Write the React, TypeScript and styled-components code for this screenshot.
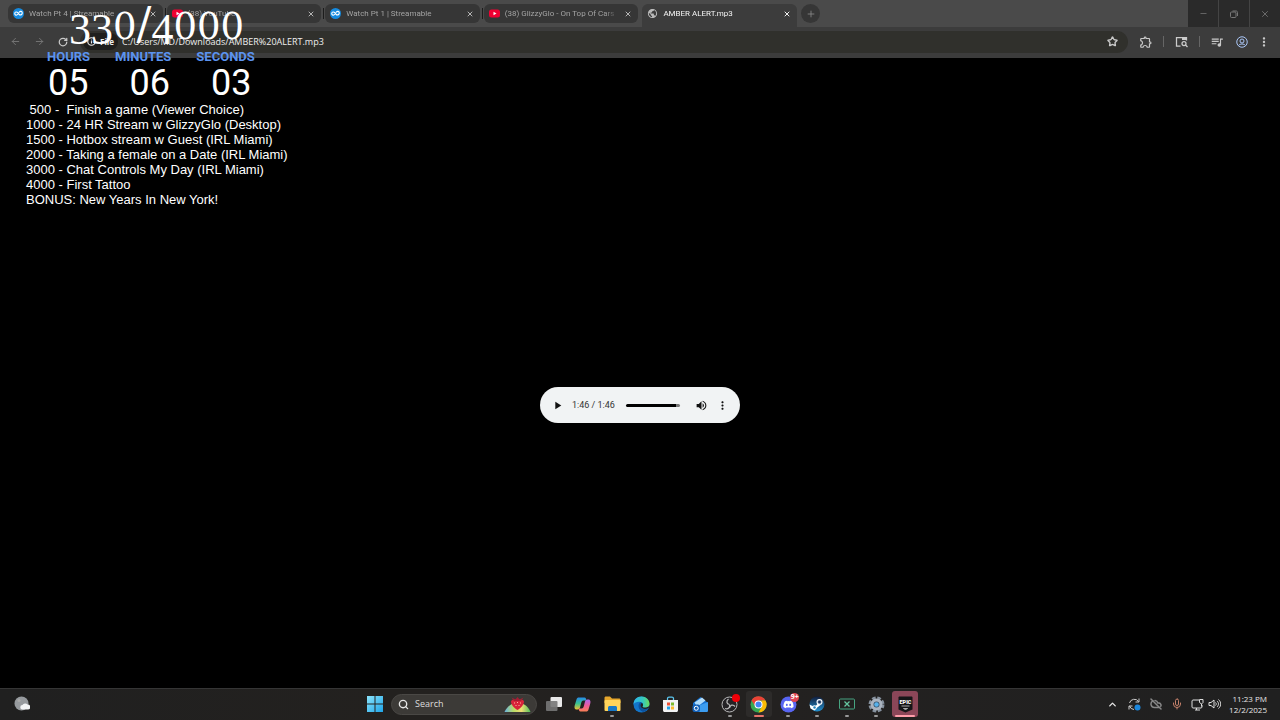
import React from "react";
import styled, { createGlobalStyle } from "styled-components";
import { ArrowLeft, ArrowRight, ChevronUp, CloudOff, Info, Minus, Mic, Plus, RotateCw, Search, Star, X } from "lucide-react";
import { MdMoreVert, MdPlayArrow, MdVolumeUp, MdOutlineExtension, MdQueueMusic, MdPublic } from "react-icons/md";
import { FaDiscord } from "react-icons/fa";

const Global = createGlobalStyle`
  * { box-sizing: border-box; }
  body { margin: 0; background: #000; font-family: "Open Sans", "Noto Sans", sans-serif; }
  button { font: inherit; color: inherit; background: none; border: 0; padding: 0; }
  svg { display: block; flex: none; }
`;

const Desktop = styled.div`
  position: relative;
  display: flex;
  flex-direction: column;
  min-height: 100vh;
  background: #000;
`;

const IconButton = styled.button<{ $w?: number }>`
  display: flex;
  align-items: center;
  justify-content: center;
  flex: none;
  width: ${(p) => p.$w ?? 24}px;
  height: 24px;
`;

/* Browser chrome */
const TabStrip = styled.header`
  display: flex;
  height: 27px;
  padding-left: 8px;
  background: #4a4a4a;
`;

const Tabs = styled.nav`
  display: flex;
  gap: 4px;
  flex: 0 1 789px;
  padding-top: 4px;
`;

const Tab = styled.div<{ $active?: boolean }>`
  position: relative;
  display: flex;
  align-items: center;
  flex: 1 1 0;
  min-width: 0;
  height: ${(p) => (p.$active ? 23 : 19)}px;
  padding: ${(p) => (p.$active ? "0 5px 4px" : "0 5px")};
  gap: 5px;
  border-radius: ${(p) => (p.$active ? "6px 6px 0 0" : "6px")};
  background: ${(p) => (p.$active ? "#3c3c3c" : "#363636")};
  color: ${(p) => (p.$active ? "#f4f4f4" : "#a3a3a3")};
  &:not(:nth-last-child(-n + 2))::after {
    content: "";
    position: absolute;
    right: -3px;
    top: 4px;
    width: 1px;
    height: 11px;
    background: #1c1c1c;
  }
`;

const TabTitle = styled.button`
  flex: 1;
  min-width: 0;
  overflow: hidden;
  text-align: left;
  white-space: nowrap;
  font-family: Roboto, sans-serif;
  font-size: 8px;
  line-height: 12px;
  mask-image: linear-gradient(90deg, #000 88%, transparent);
`;

const CloseTab = styled.button<{ $active?: boolean }>`
  display: flex;
  padding: 0 1px;
  color: ${(p) => (p.$active ? "#f0f0f0" : "#b4b4b4")};
`;

const NewTab = styled.button`
  display: flex;
  align-items: center;
  justify-content: center;
  flex: none;
  width: 19px;
  height: 19px;
  margin: 4px 0 0 4px;
  border-radius: 50%;
  background: #363636;
  color: #8a8a8a;
`;

const WindowButtons = styled.div`
  display: flex;
  gap: 1px;
  margin-left: auto;
  background: #444;
`;

const WindowButton = styled.button`
  display: flex;
  align-items: center;
  justify-content: center;
  width: 30px;
  background: #2a2a2a;
  color: #777;
`;

const Toolbar = styled.div`
  display: flex;
  align-items: center;
  height: 31px;
  padding: 0 3px 2px;
  background: #3c3c3c;
  color: #c9c9c9;
`;

const AddressBar = styled.form`
  display: flex;
  align-items: center;
  flex: 1;
  height: 22px;
  margin-left: 5px;
  padding: 0 4px 0 3px;
  border-radius: 11px;
  background: #30302c;
`;

const FileChip = styled.button`
  display: flex;
  align-items: center;
  gap: 4px;
  height: 17px;
  padding: 0 4px;
  border-radius: 8px;
  background: #1f1f1d;
  color: #eee;
  font-size: 8px;
  font-weight: 700;
`;

const Address = styled.input`
  flex: 1;
  min-width: 0;
  margin-left: 4px;
  padding: 0;
  border: 0;
  background: none;
  color: #eee;
  font: 9px/14px "Open Sans", "Noto Sans", sans-serif;
`;

const Divider = styled.span`
  width: 1px;
  height: 11px;
  background: #666;
`;

/* Stream overlay */
const Overlay = styled.aside`
  position: absolute;
  top: 0;
  left: 26px;
  color: #fff;
`;

const Goal = styled.div`
  height: 49px;
  padding-left: 43px;
  font: 44px/47px "Liberation Serif", serif;
  white-space: nowrap;
`;

const LowFigure = styled.span`
  vertical-align: -5px;
`;

const SmallFigure = styled.span`
  font-family: "DejaVu Serif", serif;
  font-size: 37px;
  line-height: 37px;
`;

const Slash = styled.span`
  font-family: "DejaVu Serif", serif;
`;

const TimerLabels = styled.div`
  display: flex;
  gap: 25px;
  padding-left: 21px;
  font: 700 13px/15px Roboto, sans-serif;
  color: #5b93ef;
`;

const TimerValues = styled.div`
  display: flex;
  gap: 41px;
  padding-left: 22px;
  font: 36px/38px Roboto, sans-serif;
`;

const Goals = styled.div`
  font: 13px/15px "Liberation Sans", sans-serif;
  white-space: pre;
`;

/* Media document */
const Page = styled.main`
  display: flex;
  align-items: center;
  justify-content: center;
  flex: 1;
  padding-top: 64px;
`;

const Player = styled.section`
  display: flex;
  align-items: center;
  width: 200px;
  height: 36px;
  padding: 0 7px;
  border-radius: 18px;
  background: #f1f3f4;
  color: #111;
`;

const Time = styled.time`
  margin: 0 11px 0 4px;
  font: 9px/12px Roboto, sans-serif;
  color: #333;
  white-space: nowrap;
`;

const Seek = styled.input`
  appearance: none;
  flex: 1;
  min-width: 0;
  height: 3px;
  margin: 0 10px 0 0;
  border-radius: 2px;
  background: linear-gradient(90deg, #000 92%, #777 92%);
  &::-webkit-slider-thumb { appearance: none; width: 1px; height: 1px; }
`;

/* Taskbar */
const Taskbar = styled.footer`
  display: grid;
  grid-template-columns: 1fr auto 1fr;
  align-items: center;
  height: 32px;
  padding: 0 13px 1px 14px;
  border-top: 1px solid #353535;
  background: linear-gradient(90deg, #202020, #23211f 30%, #232120 60%, #202020);
  color: #e6e6e6;
`;

const Launcher = styled.div`
  display: flex;
  align-items: center;
  padding-left: 2px;
`;

const SearchBox = styled.label`
  display: flex;
  align-items: center;
  width: 146px;
  height: 21px;
  margin: 0 2px 0 4px;
  padding: 0 5px 0 6px;
  gap: 6px;
  border: 1px solid #4a4845;
  border-radius: 11px;
  background: #3c3a37;
`;

const SearchInput = styled.input`
  flex: 1;
  min-width: 0;
  padding: 0;
  border: 0;
  background: none;
  color: #ddd;
  font: 9px/14px "Open Sans", "Noto Sans", sans-serif;
  &::placeholder { color: #ddd; }
`;

const Apps = styled.div`
  display: flex;
  width: 381px;
`;

const AppSlot = styled.div`
  display: flex;
  justify-content: center;
  flex: 1;
`;

const AppButton = styled.button<{ $mark?: string; $bg?: string }>`
  position: relative;
  display: flex;
  align-items: center;
  justify-content: center;
  width: 26px;
  height: 26px;
  border-radius: 3px;
  background: ${(p) => p.$bg ?? "none"};
  &::after {
    content: "";
    position: absolute;
    bottom: 0;
    width: ${(p) => (p.$mark === "dot" ? 4 : p.$mark === "pink" ? 20 : 10)}px;
    height: 2px;
    border-radius: 1px;
    background: ${(p) => (!p.$mark ? "none" : p.$mark === "dot" ? "#999" : p.$mark === "pink" ? "#ff9daa" : "#e8756a")};
  }
`;

const Badge = styled.span<{ $dot?: boolean }>`
  position: absolute;
  top: ${(p) => (p.$dot ? 3 : 2)}px;
  right: ${(p) => (p.$dot ? 3 : 2)}px;
  width: ${(p) => (p.$dot ? 8 : 9)}px;
  height: ${(p) => (p.$dot ? 8 : 9)}px;
  border-radius: 50%;
  background: ${(p) => (p.$dot ? "#f00008" : "#e04452")};
  color: #fff;
  font-size: 7px;
  line-height: 8px;
  font-weight: 700;
`;

const Tray = styled.div`
  display: flex;
  align-items: center;
  justify-content: flex-end;
`;

const Clock = styled.time`
  margin-left: 8px;
  text-align: right;
  font-size: 8px;
  line-height: 11px;
`;

const StreamableIcon = () => (
  <svg width="11" height="11" viewBox="0 0 22 22">
    <circle cx="11" cy="11" r="11" fill="#168be0" />
    <path d="M12.5 8.5c2-3 6-2 6 1.5 0 4-4 5-6.5 2.5l-2-3C7.500 7 3.500 7.500 3.500 11s4 4.500 6 1.500" fill="none" stroke="#fff" strokeWidth="2.300" strokeLinecap="round" />
  </svg>
);

const YouTubeIcon = () => (
  <svg width="11" height="11" viewBox="0 0 22 22">
    <rect y="3" width="22" height="16" rx="5" fill="#f00032" />
    <path d="M9 7.500v7l6-3.500z" fill="#fff" />
  </svg>
);

const WindowsIcon = () => (
  <svg width="16" height="16" viewBox="0 0 32 32">
    <defs>
      <linearGradient id="win" x1="0" y1="0" x2="1" y2="1">
        <stop offset="0" stopColor="#8be4fb" />
        <stop offset="1" stopColor="#1fa5e9" />
      </linearGradient>
    </defs>
    <path d="M0 0h15v15H0zM17 0h15v15H17zM0 17h15v15H0zM17 17h15v15H17z" fill="url(#win)" />
  </svg>
);

const StrawberryHill = () => (
  <svg width="27" height="17" viewBox="0 0 54 34">
    <defs>
      <linearGradient id="hill">
        <stop offset="0" stopColor="#68b3e3" />
        <stop offset=".35" stopColor="#b9dc66" />
        <stop offset=".65" stopColor="#f1dd74" />
        <stop offset="1" stopColor="#4fc25c" />
      </linearGradient>
    </defs>
    <path d="M1 32C5 22 14 15 22 15h12c9 1 15 8 19 17z" fill="url(#hill)" />
    <path d="M27 28c-7-4-13-11-13-17 2-5 9-5 13-1 4-4 11-4 13 1 0 6-6 13-13 17z" fill="#d8233a" />
    <path d="M15 3l8 4 4-5 4 5 8-4-5 7H20z" fill="#a51e33" />
    <path d="M20 14h2M26 13h2M32 14h2M23 19h2M29 19h2" stroke="#ffb0a0" strokeWidth="2" />
  </svg>
);

const TaskViewIcon = () => (
  <svg width="18" height="16" viewBox="0 0 36 32">
    <rect x="11" y="2" width="23" height="20" rx="2" fill="#e9e9e9" />
    <rect x="2" y="10" width="23" height="20" rx="2" fill="#777" opacity=".9" />
  </svg>
);

const CopilotIcon = () => (
  <svg width="17" height="17" viewBox="0 0 34 34">
    <defs>
      <linearGradient id="cpA" x1="0" y1="0" x2="0" y2="1">
        <stop offset="0" stopColor="#268bea" />
        <stop offset=".5" stopColor="#39c48f" />
        <stop offset="1" stopColor="#f2c230" />
      </linearGradient>
      <linearGradient id="cpB" x1="0" y1="0" x2="0" y2="1">
        <stop offset="0" stopColor="#aa67ee" />
        <stop offset=".5" stopColor="#ed5b9b" />
        <stop offset="1" stopColor="#fa8054" />
      </linearGradient>
    </defs>
    <path d="M10 3h11c3 0 3 3 4 6h-6c-3 0-4 2-5 6l-2 8c-1 3-3 4-6 4-5 0-6-4-4-10l3-10c1-3 2-4 5-4z" fill="url(#cpA)" />
    <path d="M24 31H13c-3 0-3-3-4-6h6c3 0 4-2 5-6l2-8c1-3 3-4 6-4 5 0 6 4 4 10l-3 10c-1 3-2 4-5 4z" fill="url(#cpB)" />
  </svg>
);

const FolderIcon = () => (
  <svg width="17" height="16" viewBox="0 0 34 32">
    <path d="M1 4c0-2 1-3 3-3h8l4 4h14c2 0 3 1 3 3v6H1z" fill="#e6a72c" />
    <rect x="1" y="8" width="32" height="22" rx="2" fill="#ffd45b" />
    <path d="M8 30v-6c0-3 1-4 4-4h10c3 0 4 1 4 4v6z" fill="#1779c8" />
  </svg>
);

const EdgeIcon = () => (
  <svg width="17" height="17" viewBox="0 0 34 34">
    <defs>
      <linearGradient id="edge">
        <stop offset="0" stopColor="#2cb4ed" />
        <stop offset=".6" stopColor="#36c9bd" />
        <stop offset="1" stopColor="#6adb58" />
      </linearGradient>
    </defs>
    <circle cx="17" cy="17" r="16" fill="#1375c9" />
    <path d="M1 17C1 7 8 1 17 1s16 7 16 14c0 6-4 9-9 9-4 0-6-1-5-3 2-2 2-8-4-9-6-1-12 1-14 5z" fill="url(#edge)" />
    <path d="M14 13c-5 4-4 15 6 19 5-1 9-4 11-8-6 4-15 2-15-4 0-3 2-3 2-5-1-2-2-3-4-2z" fill="#0c529e" />
    <path d="M19 21c2-2 1-6-1-7-3 1-4 7 0 10 4 3 9 2 13 0 2-2 2-4 2-5-3 5-14 5-14 2z" fill="#232120" />
  </svg>
);

const StoreIcon = () => (
  <svg width="17" height="17" viewBox="0 0 34 34">
    <path d="M11 8V5c0-2 1-3 3-3h6c2 0 3 1 3 3v3" fill="none" stroke="#5cc5ed" strokeWidth="2.500" />
    <path d="M2 8h30v20c0 3-1 4-4 4H6c-3 0-4-1-4-4z" fill="#f3f3f3" />
    <path d="M10 13h6v6h-6z" fill="#ee5135" />
    <path d="M18 13h6v6h-6z" fill="#7ebb2d" />
    <path d="M10 21h6v6h-6z" fill="#24a4e8" />
    <path d="M18 21h6v6h-6z" fill="#fdb92e" />
  </svg>
);

const MailIcon = () => (
  <svg width="17" height="17" viewBox="0 0 34 34">
    <path d="M2 14L17 2l15 12v14c0 3-1 4-4 4H8c-4 0-6-2-6-6z" fill="#1673d3" />
    <path d="M5 13L20 3l7 6-17 13z" fill="#b0dcfb" />
    <path d="M9 21l23-9v16c0 3-1 4-4 4H9z" fill="#3c9df0" />
    <rect x="1" y="17" width="15" height="15" rx="4" fill="#1260b8" />
    <circle cx="8.500" cy="24.500" r="4" fill="none" stroke="#fff" strokeWidth="2" />
  </svg>
);

const ObsIcon = () => (
  <svg width="17" height="17" viewBox="0 0 34 34">
    <circle cx="17" cy="17" r="15" fill="#242225" stroke="#b9b9b9" strokeWidth="2" />
    <g fill="none" stroke="#b9b9b9" strokeWidth="2.500">
      <path d="M15 6c-5 4-4 10 2 11" />
      <path d="M28 21c-4-5-10-3-11 3" />
      <path d="M8 25c6 2 11-2 9-8" />
    </g>
  </svg>
);

const ChromeIcon = () => (
  <svg width="17" height="17" viewBox="0 0 34 34">
    <circle cx="17" cy="17" r="16" fill="#35a853" />
    <path d="M3 9a16 16 0 0 1 28 0H17L11 21z" fill="#e94235" />
    <path d="M31 9a16 16 0 0 1-14 24l7-12-1-12z" fill="#fbbc05" />
    <circle cx="17" cy="17" r="8" fill="#fff" />
    <circle cx="17" cy="17" r="6" fill="#4285f4" />
  </svg>
);

const DiscordIcon = () => (
  <svg width="17" height="17" viewBox="0 0 34 34">
    <circle cx="17" cy="17" r="16" fill="#5865f2" />
    <FaDiscord x="6" y="6" size={22} color="#fff" />
  </svg>
);

const SteamIcon = () => (
  <svg width="16" height="16" viewBox="0 0 32 32">
    <defs>
      <linearGradient id="steam" x1="0" y1="0" x2="0" y2="1">
        <stop offset="0" stopColor="#111d3c" />
        <stop offset="1" stopColor="#2390ce" />
      </linearGradient>
    </defs>
    <circle cx="16" cy="16" r="15" fill="url(#steam)" />
    <path d="M1 17l10 5 7-7 5 3-9 7-3 4-8-4z" fill="#fff" />
    <circle cx="21" cy="12" r="6" fill="#fff" />
    <circle cx="21" cy="12" r="3.500" fill="#17315b" stroke="#8eabc6" />
    <circle cx="11" cy="23" r="4.500" fill="#fff" />
    <circle cx="11" cy="23" r="2.500" fill="#2384be" />
  </svg>
);

const ScreenXIcon = () => (
  <svg width="16" height="12" viewBox="0 0 32 24" fill="none" stroke="#47a481" strokeWidth="2">
    <rect x="1" y="2" width="30" height="20" rx="2" />
    <path d="M11 7l10 10M21 7L11 17" stroke="#66c6a0" strokeWidth="2.500" />
  </svg>
);

const SettingsIcon = () => (
  <svg width="17" height="17" viewBox="0 0 34 34">
    <circle cx="17" cy="17" r="13" fill="none" stroke="#86919e" strokeWidth="6" strokeDasharray="7 3.210" />
    <circle cx="17" cy="17" r="9" fill="#36536e" stroke="#aab3bf" strokeWidth="6" />
    <circle cx="17" cy="17" r="4.500" fill="#58b2eb" />
  </svg>
);

const EpicIcon = () => (
  <svg width="15" height="17" viewBox="0 0 30 34">
    <path d="M3 1h24c1 0 2 1 2 2v24l-14 6-14-6V3c0-1 1-2 2-2z" fill="#151517" />
    <text x="15" y="16" textAnchor="middle" fill="#fff" fontFamily="Roboto, sans-serif" fontWeight="900" fontSize="11">EPIC</text>
    <path d="M7 20h16M11 25h8l-4 2z" stroke="#aaa" strokeWidth="2" fill="#aaa" />
  </svg>
);

const WeatherIcon = () => (
  <svg width="16" height="16" viewBox="0 0 32 32">
    <circle cx="15" cy="15" r="14" fill="#969a9e" />
    <circle cx="10" cy="9" r="3" fill="#aaa" />
    <path d="M17 27a4.500 4.500 0 0 1 0-9 6 6 0 0 1 10-1 5 5 0 0 1 1 10z" fill="#f2f4f6" />
  </svg>
);

const SyncIcon = () => (
  <svg width="13" height="13" viewBox="0 0 26 26" fill="none" stroke="#ccc" strokeWidth="2">
    <path d="M3 10a10 10 0 0 1 18-3M22 1v7h-7M3 16a10 10 0 0 0 9 7M2 23v-7h7" />
    <circle cx="19" cy="19" r="6" fill="#1b87dd" stroke="none" />
  </svg>
);

const NetworkIcon = () => (
  <svg width="13" height="13" viewBox="0 0 26 26" fill="none" stroke="#ddd" strokeWidth="2">
    <path d="M16 4H4c-1 0-2 1-2 2v12c0 1 1 2 2 2h16c1 0 2-1 2-2v-4M8 24h10M11 20v4" />
    <path d="M17 3h7v6l-3 3-4-3zM21 12v5" />
  </svg>
);

const SpeakerIcon = () => (
  <svg width="13" height="12" viewBox="0 0 26 24" fill="none" stroke="#ddd" strokeWidth="2">
    <path d="M2 9h4l6-5v16l-6-5H2zM15 9c2 2 2 4 0 6M18 6c4 4 4 8 0 12M21 3c6 6 6 12 0 18" />
  </svg>
);

const TabSearchIcon = () => (
  <svg width="13" height="12" viewBox="0 0 26 24" fill="none" stroke="#ccc" strokeWidth="2.500">
    <path d="M11 20H3V3h20v6" />
    <path d="M14 3h9v5h-9z" fill="#ccc" stroke="none" />
    <circle cx="18" cy="15" r="4" />
    <path d="M21 18l4 4" />
  </svg>
);

const ProfileIcon = () => (
  <svg width="12" height="12" viewBox="0 0 24 24" fill="none" stroke="#a9c5f5" strokeWidth="2">
    <circle cx="12" cy="12" r="10.500" />
    <circle cx="12" cy="10" r="4" />
    <path d="M5 19c3-4 11-4 14 0" />
  </svg>
);

const RestoreIcon = () => (
  <svg width="8" height="8" viewBox="0 0 16 16" fill="none" stroke="currentColor" strokeWidth="2">
    <rect x="1" y="4" width="11" height="11" rx="2" />
    <path d="M5 2h7c2 0 3 1 3 3v7" />
  </svg>
);

const tabs = [
  { title: "Watch Pt 4 | Streamable", icon: <StreamableIcon /> },
  { title: "(38) YouTube", icon: <YouTubeIcon /> },
  { title: "Watch Pt 1 | Streamable", icon: <StreamableIcon /> },
  { title: "(38) GlizzyGlo - On Top Of Cars", icon: <YouTubeIcon /> },
  { title: "AMBER ALERT.mp3", icon: <MdPublic size={11} color="#bbb" />, active: true },
];

const apps: { name: string; icon: React.ReactNode; mark?: string; bg?: string; badge?: React.ReactNode }[] = [
  { name: "Task view", icon: <TaskViewIcon /> },
  { name: "Copilot", icon: <CopilotIcon /> },
  { name: "File Explorer", icon: <FolderIcon />, mark: "dot" },
  { name: "Edge", icon: <EdgeIcon /> },
  { name: "Store", icon: <StoreIcon /> },
  { name: "Mail", icon: <MailIcon /> },
  { name: "OBS", icon: <ObsIcon />, mark: "dot", badge: <Badge $dot /> },
  { name: "Chrome", icon: <ChromeIcon />, mark: "line", bg: "#2d2b2a" },
  { name: "Discord", icon: <DiscordIcon />, mark: "dot", badge: <Badge>9+</Badge> },
  { name: "Steam", icon: <SteamIcon />, mark: "dot" },
  { name: "Screen", icon: <ScreenXIcon />, mark: "dot" },
  { name: "Settings", icon: <SettingsIcon />, mark: "dot" },
  { name: "Epic Games", icon: <EpicIcon />, mark: "pink", bg: "#8b4658" },
];

const timer = [
  ["HOURS", "05"],
  ["MINUTES", "06"],
  ["SECONDS", "03"],
];

const goals = [
  " 500 -  Finish a game (Viewer Choice)",
  "1000 - 24 HR Stream w GlizzyGlo (Desktop)",
  "1500 - Hotbox stream w Guest (IRL Miami)",
  "2000 - Taking a female on a Date (IRL Miami)",
  "3000 - Chat Controls My Day (IRL Miami)",
  "4000 - First Tattoo",
  "BONUS: New Years In New York!",
];

export default function App() {
  return (
    <Desktop>
      <Global />
      <TabStrip>
        <Tabs>
          {tabs.map((t, i) => (
            <Tab key={i} $active={t.active}>
              {t.icon}
              <TabTitle>{t.title}</TabTitle>
              <CloseTab aria-label="Close tab" $active={t.active}><X size={8} strokeWidth={3} /></CloseTab>
            </Tab>
          ))}
        </Tabs>
        <NewTab aria-label="New tab"><Plus size={10} /></NewTab>
        <WindowButtons>
          <WindowButton aria-label="Minimize"><Minus size={9} /></WindowButton>
          <WindowButton aria-label="Restore"><RestoreIcon /></WindowButton>
          <WindowButton aria-label="Close"><X size={10} /></WindowButton>
        </WindowButtons>
      </TabStrip>

      <Toolbar>
        <IconButton aria-label="Back"><ArrowLeft size={11} color="#777" /></IconButton>
        <IconButton aria-label="Forward"><ArrowRight size={11} color="#777" /></IconButton>
        <IconButton aria-label="Reload"><RotateCw size={10} strokeWidth={3} /></IconButton>
        <AddressBar>
          <FileChip type="button"><Info size={9} strokeWidth={3} />File</FileChip>
          <Address aria-label="Address" defaultValue="C:/Users/MD/Downloads/AMBER%20ALERT.mp3" />
          <IconButton type="button" aria-label="Bookmark"><Star size={11} strokeWidth={3} /></IconButton>
        </AddressBar>
        <IconButton $w={35} aria-label="Extensions"><MdOutlineExtension size={14} /></IconButton>
        <Divider />
        <IconButton $w={35} aria-label="Search tabs"><TabSearchIcon /></IconButton>
        <Divider />
        <IconButton $w={33} aria-label="Media"><MdQueueMusic size={14} /></IconButton>
        <IconButton $w={17} aria-label="Profile"><ProfileIcon /></IconButton>
        <IconButton $w={27} aria-label="Menu"><MdMoreVert size={14} /></IconButton>
      </Toolbar>

      <Page>
        <Player aria-label="Audio player">
          <IconButton $w={21} aria-label="Play"><MdPlayArrow size={13} /></IconButton>
          <Time>1:46 / 1:46</Time>
          <Seek type="range" aria-label="Seek" min={0} max={106} defaultValue={106} />
          <IconButton $w={22} aria-label="Mute"><MdVolumeUp size={13} /></IconButton>
          <IconButton $w={21} aria-label="More options"><MdMoreVert size={13} /></IconButton>
        </Player>
      </Page>

      <Taskbar>
        <WeatherIcon />
        <Launcher>
          <IconButton aria-label="Start"><WindowsIcon /></IconButton>
          <SearchBox>
            <Search size={11} strokeWidth={3} />
            <SearchInput aria-label="Search" placeholder="Search" />
            <StrawberryHill />
          </SearchBox>
          <Apps>
            {apps.map((a) => (
              <AppSlot key={a.name}>
                <AppButton aria-label={a.name} $mark={a.mark} $bg={a.bg}>
                  {a.icon}
                  {a.badge}
                </AppButton>
              </AppSlot>
            ))}
          </Apps>
        </Launcher>
        <Tray>
          <IconButton $w={21} aria-label="Hidden icons"><ChevronUp size={11} strokeWidth={3} /></IconButton>
          <IconButton $w={22} aria-label="Sync"><SyncIcon /></IconButton>
          <IconButton $w={21} aria-label="Cloud"><CloudOff size={12} strokeWidth={3} color="#888" /></IconButton>
          <IconButton $w={22} aria-label="Microphone"><Mic size={12} color="#c4806a" /></IconButton>
          <IconButton $w={19} aria-label="Network"><NetworkIcon /></IconButton>
          <IconButton $w={14} aria-label="Volume"><SpeakerIcon /></IconButton>
          <Clock>11:23 PM<br />12/2/2025</Clock>
        </Tray>
      </Taskbar>

      <Overlay>
        <Goal>
          <LowFigure>33</LowFigure>
          <SmallFigure>0</SmallFigure>
          <Slash>/</Slash>
          <LowFigure>4</LowFigure>
          <SmallFigure>000</SmallFigure>
        </Goal>
        <TimerLabels>
          {timer.map(([label]) => <span key={label}>{label}</span>)}
        </TimerLabels>
        <TimerValues>
          {timer.map(([label, value]) => <span key={label}>{value}</span>)}
        </TimerValues>
        <Goals>
          {goals.map((g) => (
            <div key={g}>{g}</div>
          ))}
        </Goals>
      </Overlay>
    </Desktop>
  );
}
